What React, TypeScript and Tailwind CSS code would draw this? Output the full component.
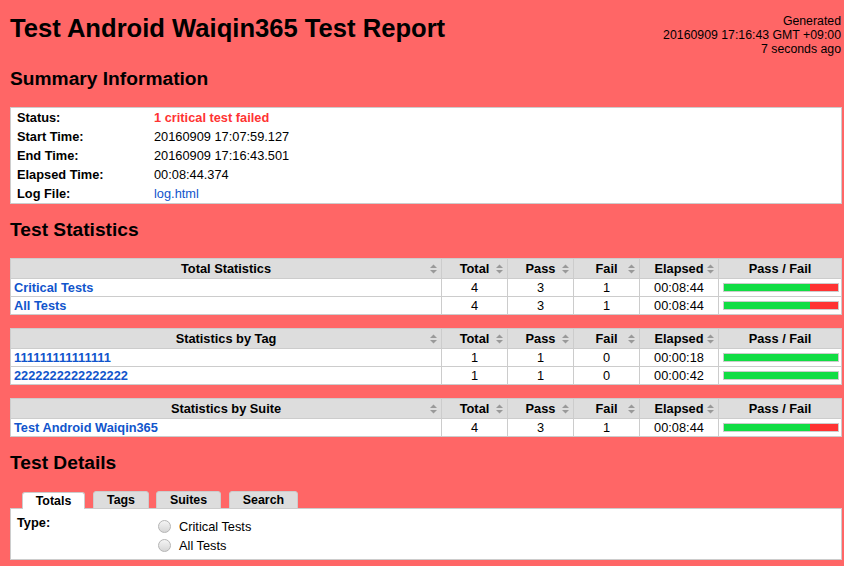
import React from 'react';

type Row = { name: string; total: number; pass: number; fail: number; elapsed: string };

const SortIcon = () => (
  <svg width="7" height="10" viewBox="0 0 7 10" className="absolute right-[4px] top-1/2 -translate-y-1/2">
    <polygon points="0,4 3.5,0.5 7,4" fill="#999999" />
    <polygon points="0,6 7,6 3.5,9.5" fill="#999999" />
  </svg>
);

const HeadCell = ({ label, sort = true }: { label: string; sort?: boolean }) => (
  <div className="relative bg-[#dddddd] h-[19px] leading-[19px] text-center font-bold">
    {label}
    {sort && <SortIcon />}
  </div>
);

const Bar = ({ pass, total }: { pass: number; total: number }) => (
  <div className="bg-white h-[17px] flex items-center pl-[4px]">
    <div className="w-[116px] h-[9px] border border-[#cccccc] flex">
      <div className="h-full bg-[#11dd44]" style={{ width: `${(pass / total) * 100}%` }} />
      <div className="h-full flex-1 bg-[#ff3333]" />
    </div>
  </div>
);

const StatTable = ({ title, rows }: { title: string; rows: Row[] }) => (
  <div className="grid grid-cols-[430px_65px_65px_65px_78px_122px] gap-px bg-[#cccccc] p-px">
    <HeadCell label={title} />
    <HeadCell label="Total" />
    <HeadCell label="Pass" />
    <HeadCell label="Fail" />
    <HeadCell label="Elapsed" />
    <HeadCell label="Pass / Fail" sort={false} />
    {rows.map((r) => (
      <React.Fragment key={r.name}>
        <div className="bg-white h-[17px] leading-[17px] pl-[3px] font-bold">
          <a className="text-[#1155cc]">{r.name}</a>
        </div>
        <div className="bg-white h-[17px] leading-[17px] text-center">{r.total}</div>
        <div className="bg-white h-[17px] leading-[17px] text-center">{r.pass}</div>
        <div className="bg-white h-[17px] leading-[17px] text-center">{r.fail}</div>
        <div className="bg-white h-[17px] leading-[17px] text-center">{r.elapsed}</div>
        <Bar pass={r.pass} total={r.total} />
      </React.Fragment>
    ))}
  </div>
);

const Heading = ({ children, className = '' }: { children: React.ReactNode; className?: string }) => (
  <h2 className={`text-[19.2px] leading-[22px] font-bold ${className}`}>{children}</h2>
);

const Radio = ({ label }: { label: string }) => (
  <div className="h-[19px] flex items-center">
    <span className="w-[13px] h-[13px] rounded-full border border-[#b5b5b5] bg-gradient-to-b from-[#f4f4f4] to-[#d6d6d6]" />
    <span className="ml-[8px] leading-[19px]">{label}</span>
  </div>
);

export default function App() {
  const summary: [string, React.ReactNode][] = [
    ['Status:', <span className="text-[#ff3333] font-bold">1 critical test failed</span>],
    ['Start Time:', '20160909 17:07:59.127'],
    ['End Time:', '20160909 17:16:43.501'],
    ['Elapsed Time:', '00:08:44.374'],
    ['Log File:', <a className="text-[#1155cc]">log.html</a>],
  ];

  return (
    <div className="min-h-[566px] bg-[#ff6666] pl-[10px] pr-[2px] pb-[6px] text-black text-[12.8px] font-['Liberation_Sans',Arial,sans-serif]">
      {/* header */}
      <div className="flex justify-between items-start">
        <h1 className="pt-[14px] text-[25.6px] leading-[29px] font-bold">Test Android Waiqin365 Test Report</h1>
        <div className="pt-[15px] pr-[1px] text-right text-[12.3px] leading-[13.8px]">
          <div>Generated</div>
          <div>20160909 17:16:43 GMT +09:00</div>
          <div>7 seconds ago</div>
        </div>
      </div>

      <Heading className="mt-[12px] mb-[17px]">Summary Information</Heading>
      <div className="bg-white border border-[#cccccc] grid grid-cols-[143px_1fr]">
        {summary.map(([k, v]) => (
          <React.Fragment key={k}>
            <div className="pl-[6px] h-[19px] leading-[19px] font-bold">{k}</div>
            <div className="h-[19px] leading-[19px]">{v}</div>
          </React.Fragment>
        ))}
      </div>

      <Heading className="mt-[15px] mb-[17px]">Test Statistics</Heading>
      <div className="flex flex-col gap-[13px]">
        <StatTable
          title="Total Statistics"
          rows={[
            { name: 'Critical Tests', total: 4, pass: 3, fail: 1, elapsed: '00:08:44' },
            { name: 'All Tests', total: 4, pass: 3, fail: 1, elapsed: '00:08:44' },
          ]}
        />
        <StatTable
          title="Statistics by Tag"
          rows={[
            { name: '111111111111111', total: 1, pass: 1, fail: 0, elapsed: '00:00:18' },
            { name: '2222222222222222', total: 1, pass: 1, fail: 0, elapsed: '00:00:42' },
          ]}
        />
        <StatTable
          title="Statistics by Suite"
          rows={[{ name: 'Test Android Waiqin365', total: 4, pass: 3, fail: 1, elapsed: '00:08:44' }]}
        />
      </div>

      <Heading className="mt-[15px]">Test Details</Heading>
      <div className="relative z-10 mt-[17px] -mb-px pl-[12px] flex items-end text-[12.4px] font-bold">
        <div className="w-[63px] h-[17px] pt-px leading-[14px] text-center bg-white border border-b-0 border-[#cccccc] rounded-t-[3px]">Totals</div>
        <div className="ml-[8px] w-[56px] h-[18px] pt-px leading-[14px] text-center bg-[#dddddd] border border-[#cccccc] rounded-t-[3px]">Tags</div>
        <div className="ml-[7px] w-[65px] h-[18px] pt-px leading-[14px] text-center bg-[#dddddd] border border-[#cccccc] rounded-t-[3px]">Suites</div>
        <div className="ml-[8px] w-[69px] h-[18px] pt-px leading-[14px] text-center bg-[#dddddd] border border-[#cccccc] rounded-t-[3px]">Search</div>
      </div>
      <div className="bg-white border border-[#cccccc] flex pb-[4px]">
        <div className="w-[147px] pl-[6px] pt-[4px] leading-[19px] font-bold">Type:</div>
        <div className="pt-[8px] flex flex-col">
          <Radio label="Critical Tests" />
          <Radio label="All Tests" />
        </div>
      </div>
    </div>
  );
}
